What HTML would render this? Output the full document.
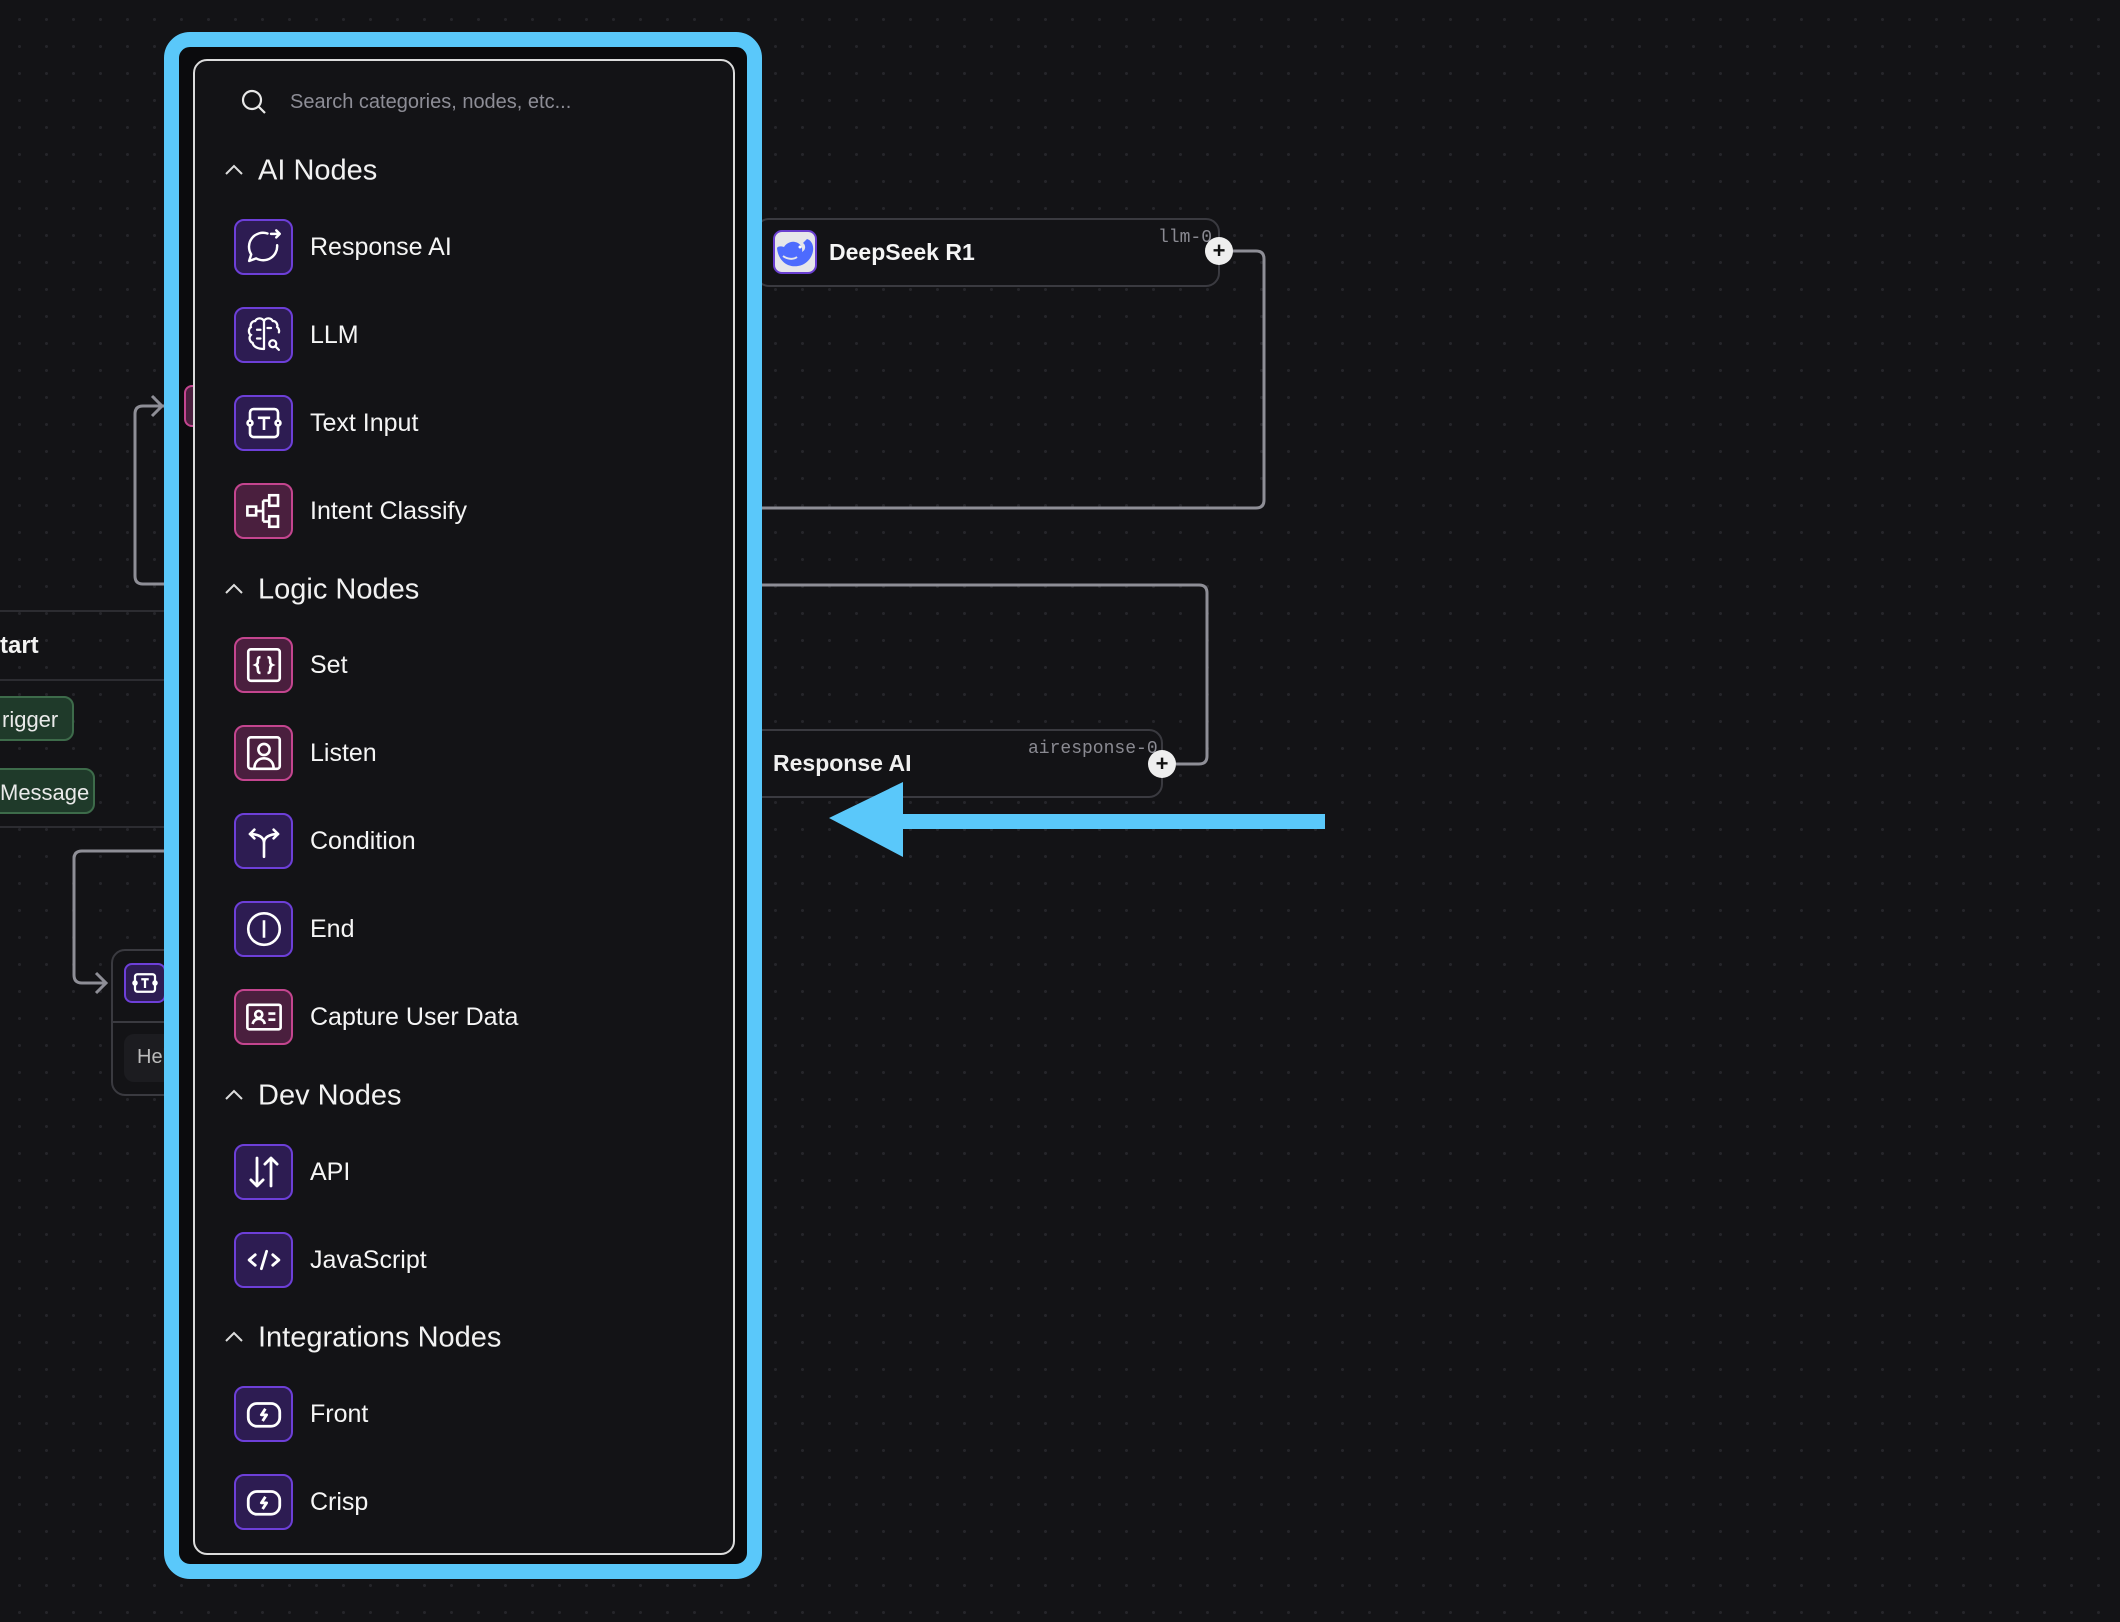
<!DOCTYPE html>
<html><head><meta charset="utf-8">
<style>
*{margin:0;padding:0;box-sizing:border-box}
html,body{width:2120px;height:1622px;overflow:hidden}
body{background:#131316;background-image:radial-gradient(circle,#25252a 1.4px,transparent 1.6px);background-size:27px 27px;background-position:6px 6px;font-family:"Liberation Sans",sans-serif;color:#fff;position:relative}
.abs{position:absolute}
.frame{left:164px;top:32px;width:598px;height:1547px;border:15px solid #5ac8fa;border-radius:26px;background:#0b0b0d}
.panel{left:193px;top:59px;width:542px;height:1496px;border:2px solid #dcdcdc;border-radius:14px;background:#131316}
.hdr{position:absolute;left:258px;font-size:29px;color:#f2f2f2;line-height:1;transform:translateY(-50%)}
.chev{position:absolute;left:224px;width:20px;height:12px;transform:translateY(-50%)}
.item{position:absolute;left:234px;height:56px;transform:translateY(-50%);display:flex;align-items:center}
.ib{width:59px;height:56px;border-radius:10px;border:2px solid #6d3fd8;background:#2d1c52;display:flex;align-items:center;justify-content:center}
.ib.p{border-color:#c4458f;background:#4a1f3e}
.ib svg{width:42px;height:42px}
.item span{margin-left:17px;font-size:25px;color:#f5f5f5}
.node{border:2px solid #3a3a40;border-radius:14px;background:#131316}
.mono{font-family:"Liberation Mono",monospace;color:#8a8a92;font-size:18px}
.plus{width:28px;height:28px;border-radius:50%;background:#eee;color:#111;font-size:22px;line-height:27px;text-align:center;font-weight:bold}
</style></head><body>

<svg class="abs" style="left:0;top:0" width="2120" height="1622">
 <g fill="none" stroke="#8e8e96" stroke-width="3">
  <path d="M1232 251 H1256 Q1264 251 1264 259 V500 Q1264 508 1256 508 H740"/>
  <path d="M740 585 H1199 Q1207 585 1207 593 V756 Q1207 764 1199 764 H1176"/>
  <path d="M164 406 H143 Q135 406 135 414 V576 Q135 584 143 584 H164"/>
  <path d="M152 396 L162 406 L152 416"/>
  <path d="M164 851 H82 Q74 851 74 859 V975 Q74 983 82 983 H106"/>
  <path d="M96 973 L106 983 L96 993"/>
  <path d="M740 251 L752 251 M745 244 L752 251 L745 258"/>
 </g>
 <g stroke="#2c2c31" stroke-width="2">
  <line x1="0" y1="611" x2="170" y2="611"/>
  <line x1="0" y1="680" x2="170" y2="680"/>
  <line x1="0" y1="827" x2="170" y2="827"/>
 </g>
</svg>

<div class="abs" style="left:0;top:632px;font-size:24px;font-weight:bold;color:#f2f2f2">tart</div>
<div class="abs" style="left:-30px;top:696px;width:104px;height:45px;border-radius:10px;background:#1f3a2a;border:2px solid #3d6b4a;font-size:22px;padding:9px 0 0 30px;color:#eaeaea">rigger</div>
<div class="abs" style="left:-30px;top:768px;width:125px;height:46px;border-radius:10px;background:#1f3a2a;border:2px solid #3d6b4a;font-size:22px;padding:10px 0 0 28px;color:#eaeaea">Message</div>

<div class="abs node" style="left:111px;top:949px;width:200px;height:147px"></div>
<div class="abs" style="left:111px;top:1021px;width:60px;border-top:2px solid #3a3a40"></div>
<div class="abs ib" style="left:124px;top:963px;width:42px;height:40px;border-radius:8px"><svg viewBox="0 0 24 24" fill="none" stroke="#fff" stroke-width="1.8" style="width:30px;height:30px"><rect x="4" y="5" width="16" height="14" rx="2"/><path d="M9 9h6M12 9v7"/><circle cx="4" cy="12" r="1.3"/><circle cx="20" cy="12" r="1.3"/></svg></div>
<div class="abs" style="left:181px;top:970px;font-size:22px;color:#ddd">T</div>
<div class="abs" style="left:124px;top:1034px;width:80px;height:48px;border-radius:10px;background:#1c1c20"></div>
<div class="abs" style="left:137px;top:1046px;font-size:20px;color:#bbb">Hello!</div>

<!-- DeepSeek node -->
<div class="abs node" style="left:755px;top:218px;width:465px;height:69px"></div>
<div class="abs" style="left:773px;top:230px;width:44px;height:44px;border-radius:9px;border:2px solid #6a3fd0;background:#e6e6ea;overflow:hidden">
 <svg viewBox="0 0 40 40" width="40" height="40"><path d="M2 16c1 12 10 20 21 18 8-1 14-8 15-15 1-6-2-11-6-12l-4 4c3 2 3 7-1 9 1-5-2-9-7-10-5-1-9 2-11 5-3-1-6-1-7 1z" fill="#4d6bfe"/><path d="M8 24c4 3 10 4 14 1" stroke="#e6e6ea" stroke-width="2" fill="none"/><circle cx="25" cy="15" r="1.5" fill="#fff"/></svg>
</div>
<div class="abs" style="left:829px;top:239px;font-size:23px;font-weight:bold;color:#f5f5f5">DeepSeek R1</div>
<div class="abs mono" style="left:1158px;top:228px">llm-0</div>
<div class="abs plus" style="left:1205px;top:237px">+</div>

<!-- Response AI node -->
<div class="abs node" style="left:740px;top:729px;width:423px;height:69px"></div>
<div class="abs" style="left:773px;top:750px;font-size:23px;font-weight:bold;color:#f0f0f0">Response AI</div>
<div class="abs mono" style="left:1028px;top:739px">airesponse-0</div>
<div class="abs plus" style="left:1148px;top:750px">+</div>

<svg class="abs" style="left:0;top:0" width="2120" height="1622">
 <polygon points="829,818 903,782 903,814 1325,814 1325,829 903,829 903,857" fill="#5ac8fa"/>
</svg>

<div class="abs frame"></div>
<div class="abs" style="left:184px;top:385px;width:12px;height:42px;border-radius:8px 0 0 8px;border:2px solid #c4458f;border-right:none;background:#4a1f3e"></div>
<div class="abs panel"></div>

<svg class="abs" style="left:240px;top:88px" width="28" height="28" viewBox="0 0 28 28" fill="none" stroke="#e8e8e8" stroke-width="2.2"><circle cx="12" cy="12" r="9"/><path d="M19 19l6 6"/></svg>
<div class="abs" style="left:290px;top:91px;font-size:20px;color:#8d8d96">Search categories, nodes, etc...</div>

<svg class="chev" style="top:170px" viewBox="0 0 20 12" fill="none" stroke="#ddd" stroke-width="2"><path d="M2 10l8-8 8 8"/></svg>
<div class="hdr" style="top:171px">AI Nodes</div>

<div class="item" style="top:247px"><div class="ib"><svg viewBox="0 0 24 24" fill="none" stroke="#fff" stroke-width="1.4" stroke-linecap="round" stroke-linejoin="round"><path d="M19.5 11a8 8 0 0 1-12 7.5L3.5 20l1.2-3.8A8 8 0 0 1 14 4.3"/><path d="M16 4.5h5M19 2.5l2 2-2 2"/></svg></div><span>Response AI</span></div>
<div class="item" style="top:335px"><div class="ib"><svg viewBox="0 0 24 24" fill="none" stroke="#fff" stroke-width="1.3" stroke-linecap="round"><path d="M12 4v16M12 4c-1-2-4-2-5 0-2 0-3 2-2.5 3.5C3 8.5 3 11 4.5 12 3 13.5 4 16 5.5 16.5 6 19 9 20 12 20"/><path d="M12 4c1-2 4-2 5 0 2 0 3 2 2.5 3.5 1 .8 1.3 2 1 3"/><path d="M8 9h2M8 14h2M14 8h2"/><circle cx="17" cy="17" r="2"/><path d="M18.5 18.5L20.5 20.5"/></svg></div><span>LLM</span></div>
<div class="item" style="top:423px"><div class="ib"><svg viewBox="0 0 24 24" fill="none" stroke="#fff" stroke-width="1.5"><rect x="4" y="4" width="16" height="16" rx="2"/><path d="M8.5 9h7M12 9v7"/><circle cx="4" cy="12" r="1.4" fill="#2d1c52"/><circle cx="20" cy="12" r="1.4" fill="#2d1c52"/></svg></div><span>Text Input</span></div>
<div class="item" style="top:511px"><div class="ib p"><svg viewBox="0 0 24 24" fill="none" stroke="#fff" stroke-width="1.5"><rect x="2.5" y="9.5" width="5" height="5"/><rect x="15" y="3" width="5" height="6"/><rect x="15" y="15" width="5" height="6"/><path d="M7.5 12h4M11.5 6v12M11.5 6h3.5M11.5 18h3.5"/></svg></div><span>Intent Classify</span></div>

<svg class="chev" style="top:589px" viewBox="0 0 20 12" fill="none" stroke="#ddd" stroke-width="2"><path d="M2 10l8-8 8 8"/></svg>
<div class="hdr" style="top:590px">Logic Nodes</div>

<div class="item" style="top:665px"><div class="ib p"><svg viewBox="0 0 24 24" fill="none" stroke="#fff" stroke-width="1.5"><rect x="3" y="3" width="18" height="18" rx="1.5"/><path d="M10 7.5c-1.5 0-1.5 1-1.5 2s0 2-1.2 2.5c1.2.5 1.2 1.5 1.2 2.5s0 2 1.5 2M14 7.5c1.5 0 1.5 1 1.5 2s0 2 1.2 2.5c-1.2.5-1.2 1.5-1.2 2.5s0 2-1.5 2"/></svg></div><span>Set</span></div>
<div class="item" style="top:753px"><div class="ib p"><svg viewBox="0 0 24 24" fill="none" stroke="#fff" stroke-width="1.5"><rect x="3" y="3" width="18" height="18" rx="1.5"/><circle cx="12" cy="10" r="3.2"/><path d="M6.5 21c0-4 2.5-6 5.5-6s5.5 2 5.5 6"/></svg></div><span>Listen</span></div>
<div class="item" style="top:841px"><div class="ib"><svg viewBox="0 0 24 24" fill="none" stroke="#fff" stroke-width="1.5" stroke-linecap="round" stroke-linejoin="round"><path d="M12 21v-8c0-3-3-5-8-5M12 13c0-3 3-5 8-5"/><path d="M6.5 5.5L4 8l2.5 2.5M17.5 5.5L20 8l-2.5 2.5"/></svg></div><span>Condition</span></div>
<div class="item" style="top:929px"><div class="ib"><svg viewBox="0 0 24 24" fill="none" stroke="#fff" stroke-width="1.5"><circle cx="12" cy="12" r="9"/><path d="M12 7v10"/></svg></div><span>End</span></div>
<div class="item" style="top:1017px"><div class="ib p"><svg viewBox="0 0 24 24" fill="none" stroke="#fff" stroke-width="1.5"><rect x="2.5" y="5" width="19" height="14" rx="1"/><circle cx="9" cy="10.5" r="2"/><path d="M5.5 16c.5-2 2-3 3.5-3s3 1 3.5 3M14.5 10h4M14.5 13.5h4"/></svg></div><span>Capture User Data</span></div>

<svg class="chev" style="top:1095px" viewBox="0 0 20 12" fill="none" stroke="#ddd" stroke-width="2"><path d="M2 10l8-8 8 8"/></svg>
<div class="hdr" style="top:1096px">Dev Nodes</div>

<div class="item" style="top:1172px"><div class="ib"><svg viewBox="0 0 24 24" fill="none" stroke="#fff" stroke-width="1.6" stroke-linecap="round" stroke-linejoin="round"><path d="M8 4v16M4.5 16.5L8 20l3.5-3.5M16 20V4M12.5 7.5L16 4l3.5 3.5"/></svg></div><span>API</span></div>
<div class="item" style="top:1260px"><div class="ib"><svg viewBox="0 0 24 24" fill="none" stroke="#fff" stroke-width="1.6" stroke-linecap="round" stroke-linejoin="round"><path d="M7 9l-3.5 3L7 15M17 9l3.5 3L17 15M13.5 7l-3 10"/></svg></div><span>JavaScript</span></div>

<svg class="chev" style="top:1337px" viewBox="0 0 20 12" fill="none" stroke="#ddd" stroke-width="2"><path d="M2 10l8-8 8 8"/></svg>
<div class="hdr" style="top:1338px">Integrations Nodes</div>

<div class="item" style="top:1414px"><div class="ib"><svg viewBox="0 0 24 24" fill="none" stroke="#fff" stroke-width="1.6" stroke-linejoin="round"><rect x="3" y="6" width="18" height="13" rx="5"/><path d="M12.8 9l-2.3 3.5h3l-2.3 3.5"/></svg></div><span>Front</span></div>
<div class="item" style="top:1502px"><div class="ib"><svg viewBox="0 0 24 24" fill="none" stroke="#fff" stroke-width="1.6" stroke-linejoin="round"><rect x="3" y="6" width="18" height="13" rx="5"/><path d="M12.8 9l-2.3 3.5h3l-2.3 3.5"/></svg></div><span>Crisp</span></div>

</body></html>
